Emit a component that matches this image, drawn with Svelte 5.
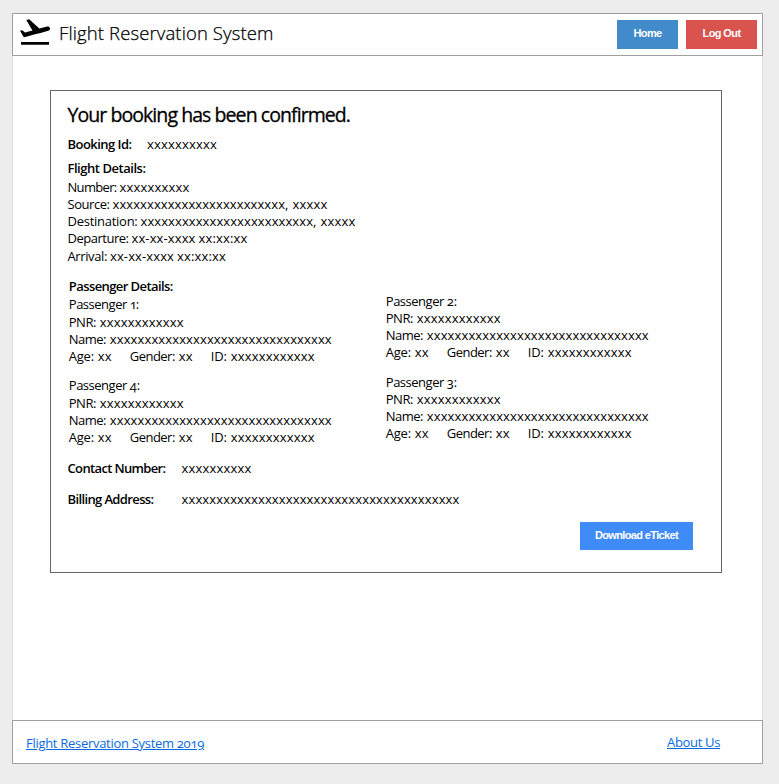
<script>
  const x = (n) => 'x'.repeat(n);

  const flight = [
    [['Number:', 49, 3], [x(10), 70]],
    [['Source:', 42, 3], [x(25) + ',', 176, 4], [x(5), 35]],
    [['Destination:', 70, 3], [x(25) + ',', 176, 4], [x(5), 35]],
    [['Departure:', 61, 3], ['xx-xx-xxxx', 64, 3], ['xx:xx:xx', 49]],
    [['Arrival:', 39.5, 3], ['xx-xx-xxxx', 64, 3], ['xx:xx:xx', 49]]
  ];

  const passenger = (n) => [
    [['Passenger', 58, 3], [n + ':', n === 1 ? 8 : 10]],
    [['PNR:', 27, 4], [x(12), 84]],
    [['Name:', 37, 4], [x(32), 222]],
    [['Age:', 25, 4], ['xx', 14, 18], ['Gender:', 45, 4], ['xx', 14, 18], ['ID:', 16, 4], [x(12), 84]]
  ];

  // Tracks a run of text so that it spans the given width.
  function fit(node, width) {
    const range = document.createRange();
    range.selectNodeContents(node);
    const natural = range.getBoundingClientRect().width;
    node.style.letterSpacing = (width - natural) / node.textContent.length + 'px';
  }
</script>

{#snippet line(parts)}
  <div class="line">
    {#each parts as [text, width, gap]}
      <span style:margin-right="{gap ?? 0}px" use:fit={width}>{text}</span>
    {/each}
  </div>
{/snippet}

<div class="page">
  <header>
    <svg class="logo" viewBox="1.8 3.55 20.35 17.5" width="30" height="26">
      <path d="M2.5 19h19v2h-19zm19.57-9.36c-.21-.8-1.04-1.28-1.84-1.06L14.92 10l-6.9-6.43-1.93.51 4.14 7.17-4.97 1.33-1.97-1.54-1.45.39 1.82 3.16.77 1.33 1.6-.43 5.31-1.42 4.35-1.16L21 11.49c.81-.23 1.28-1.05 1.07-1.85z" />
    </svg>
    <span class="brand" use:fit={214.5}>Flight Reservation System</span>
    <nav>
      <button class="home"><span use:fit={28}>Home</span></button>
      <button class="logout"><span use:fit={38}>Log Out</span></button>
    </nav>
  </header>

  <main>
    <section class="card">
      <h1><span use:fit={282.5}>Your booking has been confirmed.</span></h1>
      <div class="line booking"><b use:fit={64}>Booking Id:</b><span use:fit={70}>{x(10)}</span></div>
      <div class="line flight-title"><b use:fit={78}>Flight Details:</b></div>
      <div class="flight">
        {#each flight as parts}{@render line(parts)}{/each}
      </div>
      <div class="passengers">
        <div>
          <div class="line ptitle"><b use:fit={104}>Passenger Details:</b></div>
          {#each [1, 4] as n}
            <div class="passenger">{#each passenger(n) as parts}{@render line(parts)}{/each}</div>
          {/each}
        </div>
        <div class="right">
          {#each [2, 3] as n}
            <div class="passenger">{#each passenger(n) as parts}{@render line(parts)}{/each}</div>
          {/each}
        </div>
      </div>
      <div class="line contact"><b use:fit={98}>Contact Number:</b><span use:fit={70}>{x(10)}</span></div>
      <div class="line contact billing"><b use:fit={86}>Billing Address:</b><span use:fit={278}>{x(40)}</span></div>
      <button class="download"><span use:fit={83}>Download eTicket</span></button>
    </section>
  </main>

  <footer>
    <a href="#home" use:fit={178}>Flight Reservation System 2019</a>
    <a href="#about" class="about" use:fit={53}>About Us</a>
  </footer>
</div>

<style>
  :global(body) { background: #ededed; }
  .page {
    box-sizing: border-box;
    width: 751px;
    height: 751px;
    margin: 13px 0 20px 12px;
    display: flex;
    flex-direction: column;
    background: #fff;
    font: 400 13px/17px "Open Sans", "Noto Sans", sans-serif;
    font-variant-numeric: oldstyle-nums;
    color: #000;
  }
  :global(#app) { display: flow-root; }
  header, footer {
    box-sizing: border-box;
    height: 44px;
    flex: none;
    border: 1px solid #a0a0a0;
    display: flex;
  }
  header { height: 43px; align-items: flex-start; }
  .logo { margin: 5px 0 0 7px; display: block; }
  .brand {
    font-size: 18.5px;
    font-weight: 300;
    line-height: 26px;
    margin: 6px 0 0 9px;
    -webkit-text-stroke: 0.25px #000;
    white-space: nowrap;
  }
  nav { display: flex; gap: 8px; margin: 6px 5px 0 auto; }
  button {
    box-sizing: border-box;
    border: 0;
    padding: 0 0 3px;
    color: #fff;
    font: bold 11px/23px "Liberation Sans", Arial, sans-serif;
    white-space: nowrap;
  }
  .home { width: 61px; height: 29px; background: #428bca; }
  .logout { width: 71px; height: 29px; background: #d9534f; }
  main { flex: 1; border: 1px solid #e0e0e0; border-width: 0 1px; padding: 34px 40px 0 37px; }
  .card {
    box-sizing: border-box;
    width: 672px;
    height: 483px;
    border: 1px solid #666;
    padding: 10px 28px 0 16.5px;
    display: flex;
    flex-direction: column;
  }
  h1 {
    margin: 0;
    font-size: 19.5px;
    line-height: 28px;
    font-weight: 500;
    -webkit-text-stroke: 0.3px #000;
    white-space: nowrap;
  }
  b { font-weight: 600; }
  .line { display: flex; height: 17px; white-space: nowrap; }
  .booking { margin-top: 7px; }
  .booking b { width: 79.5px; }
  .flight-title { margin-top: 7px; }
  .flight { margin-top: 2px; }
  .flight .line:last-child { margin-top: 1px; }
  .passengers { display: flex; margin: 13px 0 0 1.3px; }
  .passengers > div { flex: none; width: 317px; }
  .passengers .right { padding-top: 15px; }
  .ptitle { margin-bottom: 1px; }
  .passenger { margin-bottom: 13px; }
  .passengers > div:first-child .passenger { margin-bottom: 12px; }
  .passengers > div:first-child .passenger .line:first-child { margin-bottom: 1px; }
  .contact { margin-top: 2px; }
  .contact b { width: 114px; }
  .billing { margin-top: 14px; }
  .download { align-self: flex-end; width: 113px; height: 28px; margin-top: 14px; padding-bottom: 2px; background: #3f8cf8; }
  footer { align-items: flex-start; justify-content: space-between; padding: 14px 42px 0 13px; }
  a { color: #0a6be0; text-decoration: underline; text-underline-offset: 1px; white-space: nowrap; }
  .about { margin-top: -1px; }
</style>
